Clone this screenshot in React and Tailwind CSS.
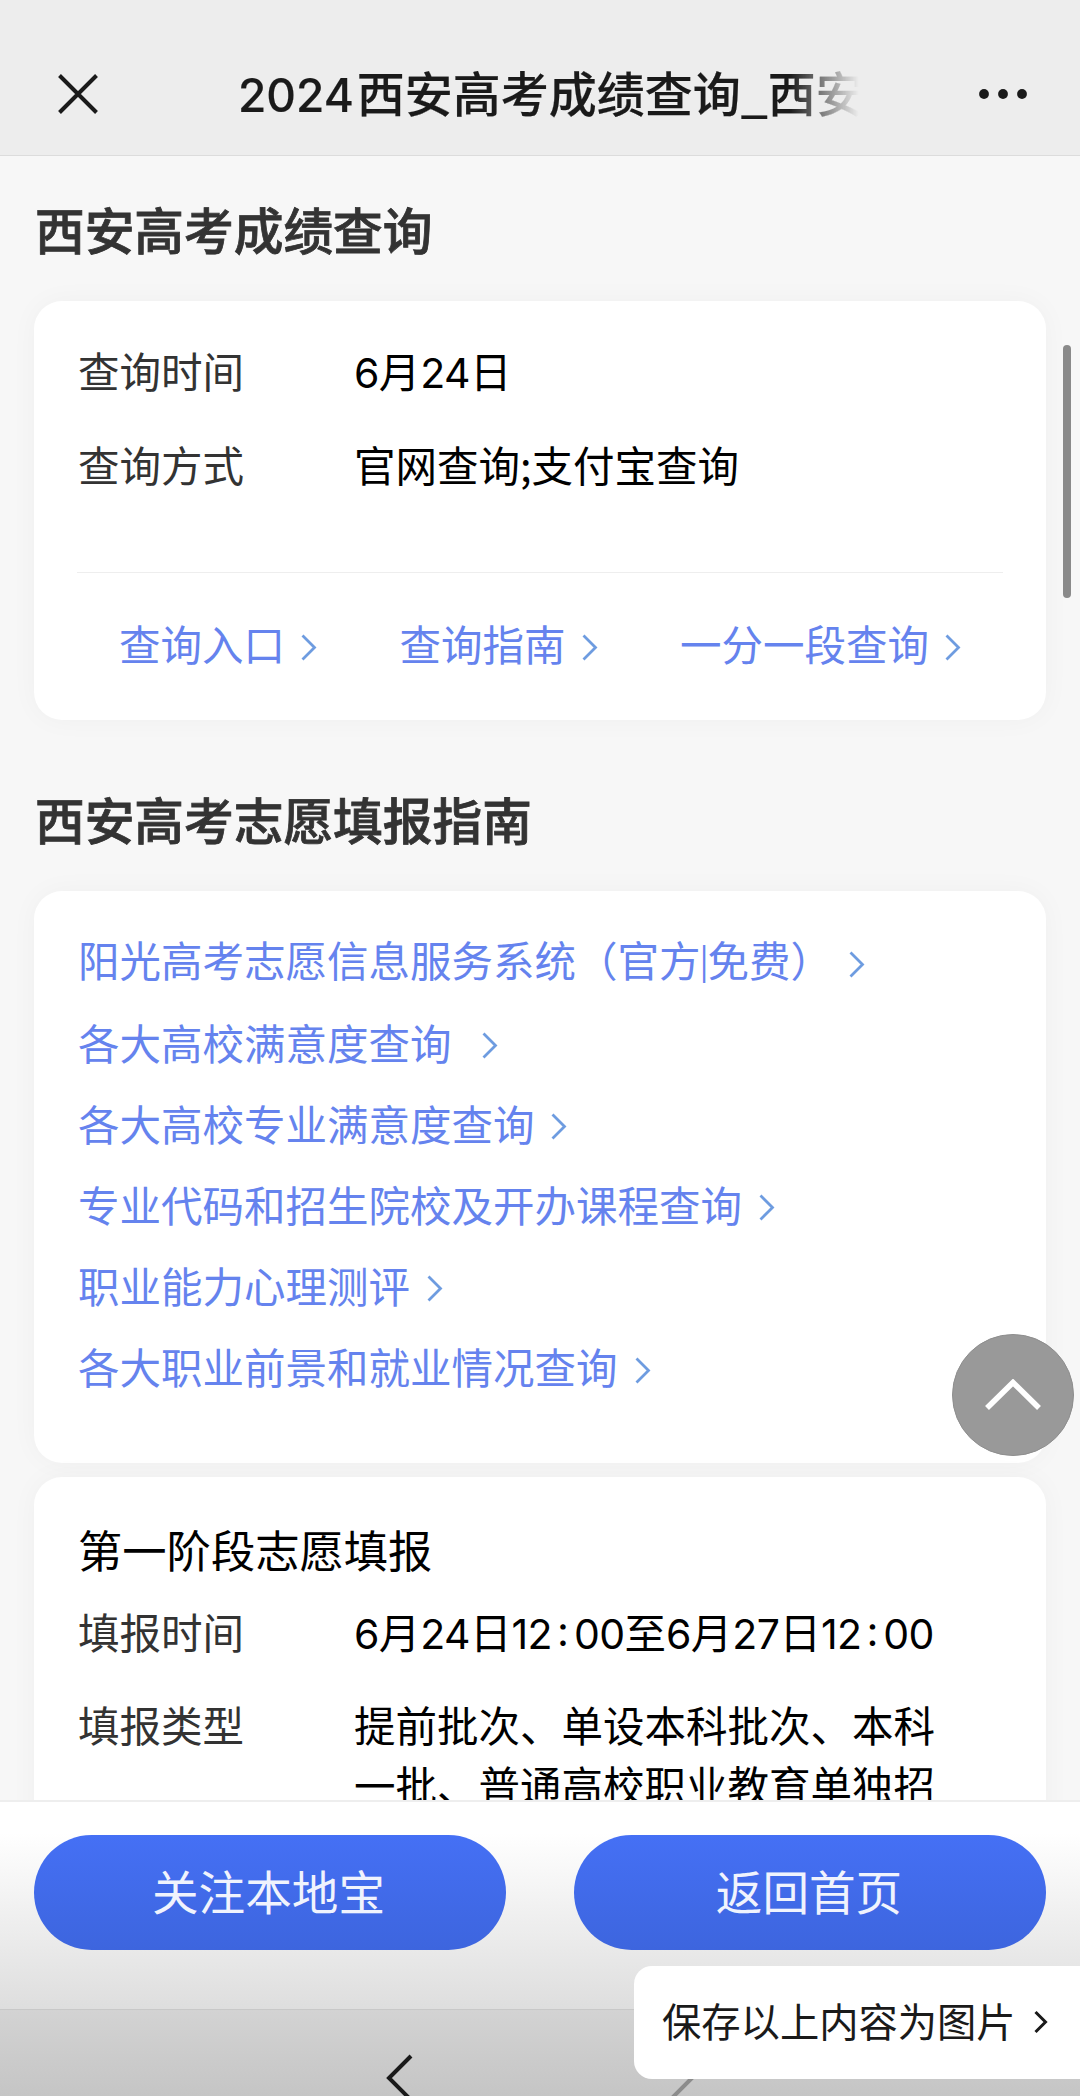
const CJK = "font-['Noto_Sans_CJK_SC',sans-serif]";

const entryLinks = ["查询入口", "查询指南", "一分一段查询"];

const guideLinks = [
  {
    text: (
      <>
        阳光高考志愿信息服务系统（官方
        <span className="mx-[-1px] inline-block w-[9px] -translate-y-[3px] text-center text-[34px]">|</span>
        免费）
      </>
    ),
    gap: "ml-[17px]",
  },
  { text: "各大高校满意度查询", gap: "ml-[30px]" },
  { text: "各大高校专业满意度查询", gap: "ml-[16px]" },
  { text: "专业代码和招生院校及开办课程查询", gap: "ml-[17px]" },
  { text: "职业能力心理测评", gap: "ml-[17px]" },
  { text: "各大职业前景和就业情况查询", gap: "ml-[17px]" },
];

function Chevron({ className = "" }) {
  return (
    <svg viewBox="0 0 16 27" className={`h-[27px] w-4 shrink-0 ${className}`} fill="none" stroke="currentColor">
      <path d="M1.5 1.5L13.5 13.5L1.5 25.5" strokeWidth="2.8" />
    </svg>
  );
}

function Num({ children }) {
  return <span className="font-['Inter'] text-[41px] tracking-[-0.6px]">{children}</span>;
}

function Time({ hour, minute }) {
  return (
    <>
      <Num>{hour}</Num>
      <span className="relative -top-[3px] px-[5px] font-['Inter']">:</span>
      <Num>{minute}</Num>
    </>
  );
}

function Header() {
  return (
    <header className="flex h-[156px] shrink-0 items-start border-b border-[#dcdcdc] bg-[#ededed] pt-[61px] text-[#1a1a1a]">
      <svg viewBox="0 0 42 42" className="mt-[12px] ml-[57px] h-[42px] w-[42px]" fill="none" stroke="currentColor" strokeWidth="4">
        <path d="M2.5 2.5L39.5 39.5M39.5 2.5L2.5 39.5" />
      </svg>
      <div className="ml-[139px] w-[627px] text-[48px] leading-[60px] font-medium whitespace-nowrap [-webkit-text-stroke:0.2px] [mask-image:linear-gradient(to_right,black_88%,transparent_99%)]">
        <span className="mr-[3px] font-['Inter'] text-[46px]">2024</span>西安高考成绩查询_西安
      </div>
      <svg viewBox="0 0 50 12" className="mt-[27px] ml-[113px] h-3 w-[50px]" fill="currentColor">
        <circle cx="6" cy="6" r="4.9" />
        <circle cx="25" cy="6" r="4.9" />
        <circle cx="44" cy="6" r="4.9" />
      </svg>
    </header>
  );
}

function SectionTitle({ className = "", children }) {
  return (
    <h2 className={`ml-[35px] text-[49.7px] leading-[64px] font-medium text-[#333] [-webkit-text-stroke:0.8px] ${className}`}>
      {children}
    </h2>
  );
}

function Card({ className = "", children }) {
  return (
    <section className={`mx-[34px] shrink-0 rounded-[28px] bg-white px-[43px] shadow-[0_0_28px_rgba(0,0,0,0.035)] ${className}`}>
      {children}
    </section>
  );
}

function Row({ label, className = "", children }) {
  return (
    <div className={`ml-px flex leading-[60px] ${className}`}>
      <div className="w-[276px] shrink-0 text-[#333]">{label}</div>
      <div className="w-[590px] text-black">{children}</div>
    </div>
  );
}

function BottomBar() {
  return (
    <footer className="absolute inset-x-0 bottom-0 flex h-[296px] flex-col border-t-2 border-[#eee]">
      <div className="flex h-[207px] shrink-0 justify-between bg-linear-to-b from-white from-15% to-[#dedede] px-[34px] pt-[33px]">
        <button className="h-[115px] w-[472px] rounded-full bg-linear-to-b from-[#4570f5] to-[#3d65de] pr-[3px] pb-[6px] text-[46.6px] text-[#f0f3fd]">
          关注本地宝
        </button>
        <button className="h-[115px] w-[472px] rounded-full bg-linear-to-b from-[#4570f5] to-[#3d65de] pr-[2px] pb-[6px] text-[46.6px] text-[#f0f3fd]">
          返回首页
        </button>
      </div>
      <div className="flex-1 border-t border-[#c8c8c8] bg-linear-to-b from-[#d3d3d3] to-[#c5c5c5]">
        <svg viewBox="0 0 1080 86" className="h-[86px] w-full" fill="none" strokeWidth="4">
          <path d="M411 46L389 68L411 90" stroke="#1a1a1a" />
          <path d="M670 46L692 68L670 90" stroke="#8c8c8c" />
        </svg>
      </div>
    </footer>
  );
}

export default function App() {
  return (
    <div className={`relative flex h-[2096px] w-[1080px] flex-col overflow-hidden bg-[#f7f7f7] text-[41.5px] ${CJK}`}>
      <Header />

      <SectionTitle className="mt-[40px]">西安高考成绩查询</SectionTitle>
      <Card className="mt-[41px] h-[419px] pt-[39px]">
        <Row label="查询时间">
          <Num>6</Num>月<Num>24</Num>日
        </Row>
        <Row label="查询方式" className="mt-[31px]">官网查询;支付宝查询</Row>
        <div className="mt-[78px] flex justify-between border-t border-[#eee] pt-[40px] pr-[42px] pl-[42px] leading-[60px] text-[#6583ee]">
          {entryLinks.map((text) => (
            <a key={text} className="flex items-center">
              {text}
              <Chevron className="mt-[9px] ml-4 text-[#6e9ce0]" />
            </a>
          ))}
        </div>
      </Card>

      <SectionTitle className="mt-[66px]">西安高考志愿填报指南</SectionTitle>
      <Card className="mt-[41px] h-[572px] pt-[29px]">
        {guideLinks.map((link, i) => (
          <a key={i} className="ml-px flex h-[81.1px] items-center leading-[60px] text-[#6583ee]">
            <span>{link.text}</span>
            <Chevron className={`mt-[8px] text-[#6e9ce0] ${link.gap}`} />
          </a>
        ))}
      </Card>

      <Card className="mt-[14px] h-[400px] pt-[42px]">
        <h3 className="ml-px text-[44.3px] leading-[60px] text-black">第一阶段志愿填报</h3>
        <Row label="填报时间" className="mt-[22px]">
          <Num>6</Num>月<Num>24</Num>日<Time hour="12" minute="00" />至<Num>6</Num>月<Num>27</Num>日<Time hour="12" minute="00" />
        </Row>
        <Row label="填报类型" className="mt-[30px]">提前批次、单设本科批次、本科一批、普通高校职业教育单独招</Row>
      </Card>

      <BottomBar />

      {/* scrollbar thumb */}
      <div className="absolute top-[345px] left-[1063px] h-[253px] w-2 rounded-full bg-[#8a8a8a]" />

      {/* back to top */}
      <button className="absolute top-[1334px] left-[952px] flex h-[122px] w-[122px] items-center justify-center rounded-full border border-[#8e8e8e] bg-[#999]">
        <svg viewBox="0 0 56 32" className="h-8 w-14" fill="none" stroke="white" strokeWidth="5.6">
          <path d="M2 29L28 3.5L54 29" />
        </svg>
      </button>

      <div className="absolute top-[1966px] right-0 flex h-[113px] w-[446px] items-center rounded-l-[18px] bg-white pb-1 pl-[28px] text-[39.3px] text-[#1a1a1a]">
        保存以上内容为图片
        <svg viewBox="0 0 14 24" className="mt-[3px] ml-[18px] h-6 w-[14px]" fill="none" stroke="currentColor" strokeWidth="3">
          <path d="M1.5 2L11.5 12L1.5 22" />
        </svg>
      </div>
    </div>
  );
}
